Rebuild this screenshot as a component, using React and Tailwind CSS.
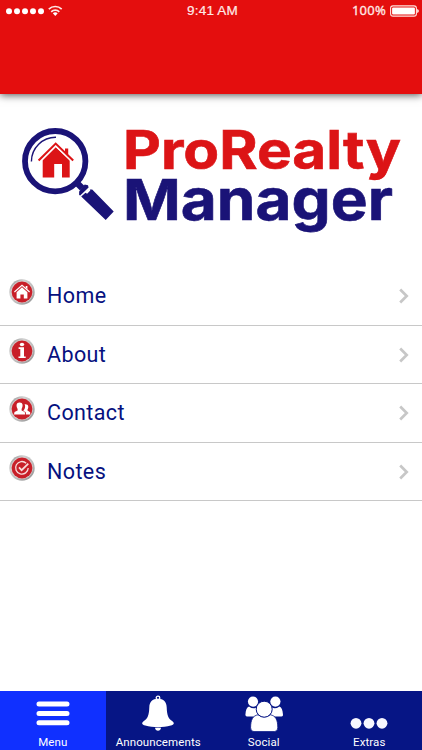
import React from "react";

function StatusBar() {
  return (
    <div className="flex h-5 items-center text-[13px] leading-5 text-[#ffe9e6]">
      <div className="flex flex-1 items-center pl-1.5 pt-px">
        <svg width="58" height="14" viewBox="0 0 58 14" fill="#fff">
          <circle cx="3" cy="7.3" r="3" />
          <circle cx="11" cy="7.3" r="3" />
          <circle cx="19" cy="7.3" r="3" />
          <circle cx="27" cy="7.3" r="3" />
          <circle cx="35" cy="7.3" r="3" />
          <g fill="none" stroke="#ffe9e6" strokeWidth="1.7">
            <path d="M42.8 5.1a9.3 9.3 0 0 1 12.9 0" />
            <path d="M45.2 7.8a5.9 5.9 0 0 1 8.1 0" />
          </g>
          <path d="M46.8 9.3a3.8 3.8 0 0 1 4.9 0l-2.4 2.6z" />
        </svg>
      </div>
      <div className="pt-px font-['Liberation_Sans',sans-serif] text-[13.5px] tracking-[0.2px] [-webkit-text-stroke:0.2px_#ffe9e6]">9:41 AM</div>
      <div className="flex flex-1 items-center justify-end gap-1 pr-[3px]">
        <span className="font-['Noto_Sans',sans-serif] tracking-[0.25px] [-webkit-text-stroke:0.3px_#ffe9e6]">100%</span>
        <svg width="29" height="12" viewBox="0 0 29 12" className="mt-px">
          <rect x="0.6" y="0.9" width="25.8" height="10.2" rx="2.4" fill="none" stroke="#ffe3df" strokeWidth="1.1" />
          <rect x="2.1" y="2.4" width="22.8" height="7.2" rx="1" fill="#fff" />
          <path d="M27.2 4q1.6.7 1.6 2t-1.6 2z" fill="#fff" />
        </svg>
      </div>
    </div>
  );
}

function Logo() {
  return (
    <svg width="422" height="173" viewBox="0 94 422 173" className="block shrink-0">
      <circle cx="55.2" cy="161.2" r="30.2" fill="none" stroke="#1a1377" strokeWidth="5.8" />
      <path d="M31.4 161.5A24.3 24.3 0 0 1 56 137.3" fill="none" stroke="#1a1377" strokeWidth="1.4" />
      <g fill="#dc1416">
        <path d="M42.7 160.2 55.7 147.3 69.7 160.2V177.5H62V164H54.2v13.5H42.7z" />
        <path d="M65 148.5h3.2v8.2L65 153.6z" />
      </g>
      <path d="M38.6 160.6 55.7 143.6 73.2 160.6" fill="none" stroke="#dc1416" strokeWidth="2.1" />
      <path d="M40.2 162 55.7 146.6 71.6 162" fill="none" stroke="#fff" strokeWidth="0.8" />
      <g fill="#1a1377">
        <path d="m74.5 185 4.5-4.5 5.5 5.5-4.5 4.5z" />
        <path d="m84.7 184.5 3.3.8.6 2.2-8.4 7.9-1.1-.4v-3.4z" />
        <path d="m92.2 189.4 21.5 22-8 8.5-24.5-23.4 4.3-3.7 1.6.9 3.2-3.2-.5-1.1z" />
      </g>
      <g fontFamily="Inter, sans-serif" fontWeight="700" strokeWidth="0.6">
        <text x="123" y="168.7" fontSize="53" textLength="278" lengthAdjust="spacingAndGlyphs" fill="#dc1416" stroke="#dc1416">ProRealty</text>
        <text x="123" y="220.4" fontSize="57" textLength="270" lengthAdjust="spacingAndGlyphs" fill="#1a1377" stroke="#1a1377">Manager</text>
      </g>
    </svg>
  );
}

const glyphs = {
  Home: (
    <g fill="#fff">
      <path d="M7.6 13.2 13 8.2l5.4 5v6.4h-3.6v-4.1h-3.4v4.1H7.6z" />
      <path d="M5.4 13 13 6.3l7.6 6.7" fill="none" stroke="#fff" strokeWidth="1.2" />
      <path d="M16.7 7h1.7v3.2l-1.7-1.5z" />
    </g>
  ),
  About: (
    <g fill="#fff">
      <ellipse cx="13" cy="6.5" rx="2.2" ry="1.8" />
      <path d="M9.6 9.3h5.4v9.1h1.7V20H9.5v-1.6h1.8v-7.5H9.6z" />
    </g>
  ),
  Contact: (
    <g fill="#fff">
      <path d="M15.6 8.2c3.9-.6 4.5 2.8 2.9 5.4v1l2.7 1.7v2.2h-4.1l-.5-2.4-2.3-1.2.9-1.4c1.1-1.7 1.2-3.7.4-5.3z" />
      <path d="M10.6 6.6c3.4-.1 3.7 3.5 2 6.3v1.5l3.1 1.6.5 2.5H5l.5-2.5 3.1-1.6v-1.5c-1.7-2.8-1.4-6.4 2-6.3z" />
    </g>
  ),
  Notes: (
    <g fill="none" stroke="#f8dddd" strokeWidth="1.3">
      <path d="M17.2 8.2A6.3 6.3 0 1 0 19.2 13" />
      <path d="m10 12.4 2.6 2.8 6.7-6.6" strokeWidth="1.7" />
    </g>
  ),
};

function Badge({ name }) {
  return (
    <svg width="26" height="26" viewBox="0 0 26 26">
      <defs>
        <linearGradient id={"rim" + name} x1="0" y1="0" x2="1" y2="1">
          <stop offset="0" stopColor="#858585" />
          <stop offset="0.3" stopColor="#d0d0d0" />
          <stop offset="0.6" stopColor="#bcbcbc" />
          <stop offset="1" stopColor="#8b8b8b" />
        </linearGradient>
      </defs>
      <circle cx="13" cy="13" r="12.7" fill={`url(#rim${name})`} />
      <circle cx="13" cy="13" r="10.8" fill="#e1d0d0" />
      <circle cx="13" cy="13" r="10.4" fill="#c81f29" />
      {glyphs[name]}
    </svg>
  );
}

function Row({ name }) {
  return (
    <div className="flex h-[58.6px] items-center border-b border-[#c8c8c8] pl-[9px] pr-3">
      <div className="pb-[7px]"><Badge name={name} /></div>
      <span className="ml-3 flex-1 pt-px font-['Roboto',sans-serif] text-[21.5px] leading-7 tracking-[0.4px] text-[#06117f]">{name}</span>
      <svg width="12" height="16" viewBox="0 0 12 16" fill="none" stroke="#c7c7c7" strokeWidth="2.7" className="mt-px">
        <path d="m2.2 1.5 6.5 6.5-6.5 6.5" />
      </svg>
    </div>
  );
}

const tabs = [
  {
    name: "Menu",
    icon: (
      <g stroke="#fff" strokeWidth="5" strokeLinecap="round">
        <path d="M6 10h28M6 19.4h28M6 28.7h28" />
      </g>
    ),
  },
  {
    name: "Announcements",
    icon: (
      <g fill="#fff">
        <circle cx="20" cy="3.9" r="1.8" fill="none" stroke="#fff" strokeWidth="1.3" />
        <path d="M20 4.8c5.7 0 8.5 3.4 8.7 8.4.3 8.4 1.6 11.2 5.4 13.8 2.8 2 2 3.8-1.3 4.5-8 2.2-17.6 2.2-25.6 0-3.3-.7-4.1-2.5-1.3-4.5 3.8-2.6 5.1-5.4 5.4-13.8.2-5 3-8.4 8.7-8.4z" />
        <path d="M17 33.8h6c-.2 4-5.8 4-6 0z" />
      </g>
    ),
  },
  {
    name: "Social",
    icon: (
      <g fill="#fff">
        <circle cx="9" cy="7.6" r="5.1" />
        <circle cx="31.4" cy="7.6" r="5.1" />
        <path d="M5 12.4q4 3 7.4 1.1c-.2 3.9.6 5.9 2.4 8.2l-5.3.7H3c-1.5-.2-1.8-1-1.5-2.5.2-3.5 1.1-6.5 3.5-7.5z" />
        <path d="M35.4 12.4q-4 3-7.4 1.1c.2 3.9-.6 5.9-2.4 8.2l5.3.7h6.5c1.5-.2 1.8-1 1.5-2.5-.2-3.5-1.1-6.5-3.5-7.5z" />
        <path d="M14 20.8c-5 .8-7.4 4.8-7.4 13q0 3.8 3.4 3.8h20.4q3.4 0 3.4-3.8c0-8.2-2.4-12.2-7.4-13q-6.2 4.2-12.4 0z" stroke="#061585" strokeWidth="0.8" />
        <circle cx="20.2" cy="15.2" r="8" stroke="#061585" strokeWidth="1" />
      </g>
    ),
  },
  {
    name: "Extras",
    icon: (
      <g fill="#f7f7ff">
        <circle cx="7" cy="29.3" r="5.4" />
        <circle cx="20" cy="29.3" r="5.4" />
        <circle cx="33" cy="29.3" r="5.4" />
      </g>
    ),
  },
];

export default function App() {
  return (
    <div className="flex h-[750px] w-[422px] flex-col overflow-hidden bg-white">
      <header className="relative h-[94px] shrink-0 bg-[#e40e0e] shadow-[0_1px_8px_0px_rgba(0,0,0,0.7)]">
        <StatusBar />
      </header>
      <Logo />
      <main className="flex-1">
        <Row name="Home" />
        <Row name="About" />
        <Row name="Contact" />
        <Row name="Notes" />
      </main>
      <nav className="grid h-[59px] shrink-0 grid-cols-4 bg-[#061585] text-white">
        {tabs.map((tab, i) => (
          <div key={tab.name} className={i === 0 ? "flex flex-col items-center bg-[#1030ff] pt-[3px]" : "flex flex-col items-center pt-[3px]"}>
            <svg width="40" height="40" viewBox="0 0 40 40">{tab.icon}</svg>
            <span className="font-['Roboto',sans-serif] text-[11.5px] leading-4 tracking-[0.1px]">{tab.name}</span>
          </div>
        ))}
      </nav>
    </div>
  );
}
